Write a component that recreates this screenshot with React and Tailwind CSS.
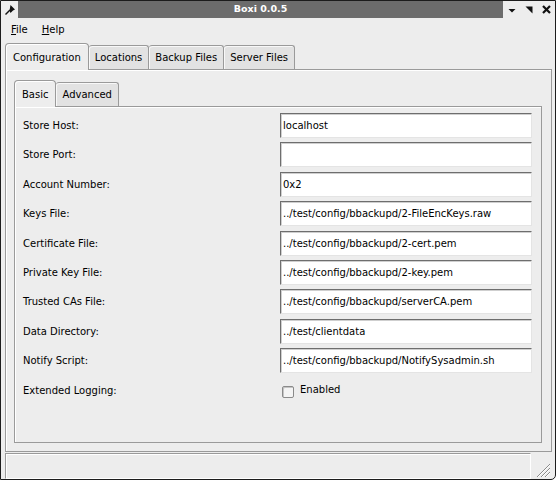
import React from "react";

const fields = [
  ["Store Host:", "localhost"],
  ["Store Port:", ""],
  ["Account Number:", "0x2"],
  ["Keys File:", "../test/config/bbackupd/2-FileEncKeys.raw"],
  ["Certificate File:", "../test/config/bbackupd/2-cert.pem"],
  ["Private Key File:", "../test/config/bbackupd/2-key.pem"],
  ["Trusted CAs File:", "../test/config/bbackupd/serverCA.pem"],
  ["Data Directory:", "../test/clientdata"],
  ["Notify Script:", "../test/config/bbackupd/NotifySysadmin.sh"],
];

const mainTabs = ["Configuration", "Locations", "Backup Files", "Server Files"];

const Tab = ({ label, active }) => (
  <div
    className={
      active
        ? "relative z-10 -mb-px h-[27px] flex items-center px-[7px] bg-[#ededed] border border-b-0 border-[#9a9a9a] rounded-t-[4px] shadow-[inset_1px_1px_0_#ffffff]"
        : "h-[24px] flex items-center px-[6px] bg-[#e2e2e2] border border-b-0 border-l-0 border-[#9a9a9a] rounded-t-[3px] shadow-[inset_1px_1px_0_#f8f8f8]"
    }
  >
    {label}
  </div>
);

const TitleBar = () => (
  <div className="h-[17px] flex">
    <div className="w-[17px] flex items-center justify-center">
      <svg width="12" height="12" viewBox="0 0 12 12">
        <path d="M6.5 1 L11 5.5 L9 6.5 L6.5 9 L5.5 6.5 Z" fill="#111" />
        <path d="M6 6 L1.5 10.5" stroke="#111" strokeWidth="1.4" />
      </svg>
    </div>
    <div className="flex-1 bg-[#6c6c6c] flex items-center justify-center text-white font-bold text-[9.5px]">
      Boxi 0.0.5
    </div>
    <div className="w-[52px] flex items-center justify-end gap-[7px] pr-[3px]">
      <svg width="10" height="10" viewBox="0 0 10 10">
        <path d="M1.5 4 L8.5 4 L5 7.5 Z" fill="#111" />
      </svg>
      <svg width="10" height="10" viewBox="0 0 10 10">
        <path d="M1.5 1.5 L8.5 1.5 L8.5 8.5 Z" fill="#111" />
      </svg>
      <svg width="11" height="11" viewBox="0 0 11 11">
        <path d="M2 2 L9 9 M9 2 L2 9" stroke="#111" strokeWidth="2.2" />
      </svg>
    </div>
  </div>
);

export default function App() {
  return (
    <div className="w-[556px] h-[480px] bg-[#ededed] border border-[#1c1c1c] rounded-br-[5px] overflow-hidden flex flex-col text-[10px] text-black font-['DejaVu_Sans',sans-serif]">
      <TitleBar />

      {/* menu */}
      <div className="h-[23px] flex items-center gap-[14px] pl-[10px]">
        <span>
          <span className="underline">F</span>ile
        </span>
        <span>
          <span className="underline">H</span>elp
        </span>
      </div>

      {/* main tabs */}
      <div className="h-[28px] flex items-end pl-[4px]">
        {mainTabs.map((t, i) => (
          <Tab key={t} label={t} active={i === 0} />
        ))}
      </div>

      <div className="flex-1 ml-[4px] mr-[3px] border border-[#9a9a9a] shadow-[inset_1px_1px_0_#ffffff] flex flex-col pt-[8px] pl-[8px] pr-[9px] pb-[8px]">
        <div className="h-[28px] flex items-end">
          <Tab label="Basic" active />
          <Tab label="Advanced" />
        </div>

        <div className="flex-1 border border-[#9a9a9a] shadow-[inset_1px_1px_0_#ffffff] pt-[6px] pl-[8px] pr-[8px] flex flex-col gap-[4.4px]">
          {fields.map(([label, value]) => (
            <div key={label} className="flex items-center h-[25px]">
              <div className="w-[257px]">{label}</div>
              <div className="w-[252px] h-[25px] bg-white border border-t-[#6e6e6e] border-l-[#6e6e6e] border-r-[#e4e4e4] border-b-[#e4e4e4] shadow-[inset_1px_1px_0_#cfcfcf] flex items-center pl-[2px]">
                {value}
              </div>
            </div>
          ))}
          <div className="flex items-center h-[25px]">
            <div className="w-[257px] pt-[1px]">Extended Logging:</div>
            <div className="flex items-start gap-[6px] pl-[2px]">
              <div className="w-[12px] h-[12px] mt-[4px] bg-[#f4f4f4] border border-[#8a8a8a] rounded-[2px] shadow-[inset_1px_1px_0_#c4c4c4]" />
              <span>Enabled</span>
            </div>
          </div>
        </div>
      </div>

      {/* status bar */}
      <div className="h-[26px] mt-px ml-[4px] flex">
        <div className="flex-1 border border-t-[#9a9a9a] border-l-[#9a9a9a] border-r-[#ffffff] border-b-[#ffffff] shadow-[inset_1px_1px_0_#ffffff]" />
        <div className="w-[24px] flex items-end justify-end pr-[4px] pb-[1px]">
          <svg width="18" height="18" viewBox="0 0 18 18">
            <path
              d="M17 4 L4 17 M17 8 L8 17 M17 12 L12 17"
              stroke="#8a8a8a"
              strokeWidth="1"
            />
            <path
              d="M17 5 L5 17 M17 9 L9 17 M17 13 L13 17"
              stroke="#ffffff"
              strokeWidth="1"
            />
          </svg>
        </div>
      </div>
    </div>
  );
}
